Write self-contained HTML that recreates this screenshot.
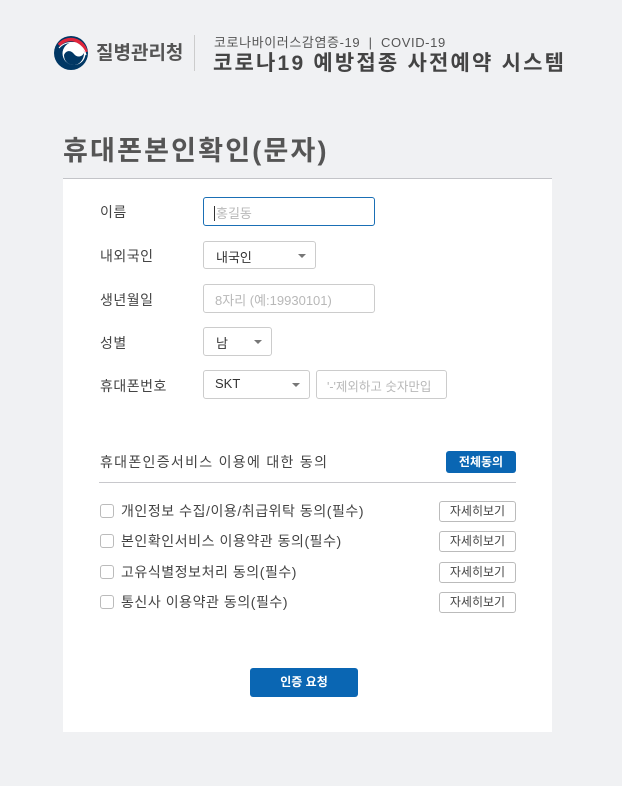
<!DOCTYPE html>
<html><head><meta charset="utf-8"><style>
*{margin:0;padding:0;box-sizing:border-box}
body{width:622px;height:786px;background:#f0f1f3;font-family:"Liberation Sans","Noto Sans CJK KR",sans-serif;position:relative;overflow:hidden;color:#333}
.a{position:absolute;white-space:nowrap}
.lbl{font-size:14px;color:#444;letter-spacing:0.5px}
.box{position:absolute;border:1px solid #ccc;border-radius:3px;background:#fff;font-size:13px}
.ph{color:#b8b8b8}
.arr{position:absolute;right:9px;top:12px;width:0;height:0;border-left:4px solid transparent;border-right:4px solid transparent;border-top:4px solid #777}
.cb{position:absolute;left:100px;width:14px;height:14px;border:1px solid #bbb;border-radius:3px;background:#fff}
.ag{position:absolute;left:121px;font-size:14px;color:#444;letter-spacing:0.55px}
.db{position:absolute;left:439px;width:77px;height:21px;border:1px solid #bbb;border-radius:3px;font-size:12px;color:#444;text-align:center;line-height:19px;background:#fff}
</style></head><body>
<svg class="a" style="left:53px;top:35px" width="36" height="36" viewBox="0 0 36 36">
<circle cx="18" cy="18" r="17" fill="#003764"/>
<circle cx="21" cy="18.5" r="11.5" fill="#fff"/>
<path d="M6 10 A15.5 15.5 0 0 1 33 17" fill="none" stroke="#e0263c" stroke-width="3.5"/>
<path d="M6 10 A15.5 15.5 0 0 1 33 17" fill="none" stroke="#fff" stroke-width="1" transform="translate(0,3)"/>
<path d="M11 20 C13 15 18 15 21 19 C24 23 29 22 31 18 C31 25 26 30 21 30 C15 30 11 26 11 20Z" fill="#003764"/>
</svg>
<div class="a" style="left:96px;top:38px;font-size:19px;font-weight:bold;color:#555">질병관리청</div>
<div class="a" style="left:194px;top:35px;width:1px;height:36px;background:#ccc"></div>
<div class="a" style="left:214px;top:32px;font-size:13px;color:#555;letter-spacing:0.6px">코로나바이러스감염증-19 &nbsp;| &nbsp;COVID-19</div>
<div class="a" style="left:213px;top:47px;font-size:21px;font-weight:bold;color:#444;letter-spacing:2.2px">코로나19 예방접종 사전예약 시스템</div>
<div class="a" style="left:63px;top:129px;font-size:27px;font-weight:bold;color:#555;letter-spacing:2.2px">휴대폰본인확인(문자)</div>
<div class="a" style="left:63px;top:178px;width:489px;height:554px;background:#fff;border-top:1px solid #c3c4c8"></div>

<div class="a lbl" style="left:100px;top:202px">이름</div>
<div class="box" style="left:203px;top:197px;width:172px;height:29px;border-color:#1a6fb5;padding:5px 10px"><span style="border-left:1px solid #333;padding-left:1px" class="ph">홍길동</span></div>
<div class="a lbl" style="left:100px;top:246px">내외국인</div>
<div class="box" style="left:203px;top:241px;width:113px;height:28px;padding:5px 12px">내국인<i class="arr"></i></div>
<div class="a lbl" style="left:100px;top:290px">생년월일</div>
<div class="box ph" style="left:203px;top:284px;width:172px;height:29px;padding:5px 11px">8자리 (예:19930101)</div>
<div class="a lbl" style="left:100px;top:333px">성별</div>
<div class="box" style="left:203px;top:327px;width:69px;height:29px;padding:5px 12px">남<i class="arr"></i></div>
<div class="a lbl" style="left:100px;top:376px">휴대폰번호</div>
<div class="box" style="left:203px;top:370px;width:107px;height:29px;padding:5px 11px">SKT<i class="arr"></i></div>
<div class="box ph" style="left:316px;top:370px;width:131px;height:29px;padding:5px 10px;font-size:12.5px">'-'제외하고 숫자만입</div>

<div class="a" style="left:100px;top:452px;font-size:14px;color:#444;letter-spacing:1.3px">휴대폰인증서비스 이용에 대한 동의</div>
<div class="a" style="left:446px;top:451px;width:70px;height:22px;background:#0a66b3;border-radius:3px;color:#fff;font-size:12px;font-weight:bold;text-align:center;line-height:22px">전체동의</div>
<div class="a" style="left:99px;top:482px;width:417px;height:1px;background:#c8c8cc"></div>

<div class="cb" style="top:504px"></div><div class="ag" style="top:501px">개인정보 수집/이용/취급위탁 동의(필수)</div><div class="db" style="top:501px">자세히보기</div>
<div class="cb" style="top:534px"></div><div class="ag" style="top:531px">본인확인서비스 이용약관 동의(필수)</div><div class="db" style="top:531px">자세히보기</div>
<div class="cb" style="top:565px"></div><div class="ag" style="top:562px">고유식별정보처리 동의(필수)</div><div class="db" style="top:562px">자세히보기</div>
<div class="cb" style="top:595px"></div><div class="ag" style="top:592px">통신사 이용약관 동의(필수)</div><div class="db" style="top:592px">자세히보기</div>

<div class="a" style="left:250px;top:668px;width:108px;height:29px;background:#0a66b3;border-radius:3px;color:#fff;font-size:12px;font-weight:bold;text-align:center;line-height:29px">인증 요청</div>
</body></html>
